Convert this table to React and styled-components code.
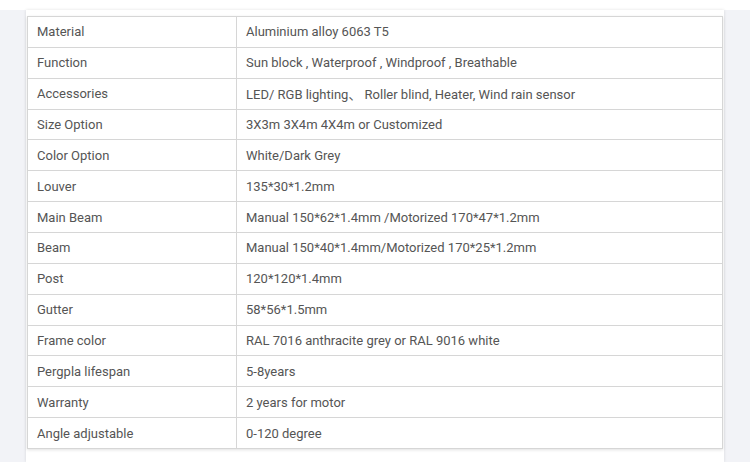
import React from "react";
import styled, { createGlobalStyle } from "styled-components";

const GlobalStyle = createGlobalStyle`
  html, body {
    margin: 0;
    padding: 0;
    background: #ffffff;
  }
  body {
    font-family: Roboto, "Noto Sans CJK SC", "Liberation Sans", Arial, sans-serif;
  }
`;

const Page = styled.div`
  width: 750px;
  height: 462px;
  overflow: hidden;
  padding-top: 10px;
  box-sizing: border-box;
`;

const Backdrop = styled.div`
  background: #f2f3f7;
  height: 452px;
  padding: 0 26px;
  box-sizing: border-box;
`;

const Panel = styled.div`
  background: #ffffff;
  height: 100%;
  padding: 6px 1px 0 1px;
  box-sizing: border-box;
  box-shadow: 0 0 3px rgba(0, 0, 0, 0.12);
`;

const Table = styled.table`
  width: 100%;
  border-collapse: collapse;
  box-shadow: 0 1px 3px rgba(0, 0, 0, 0.12);
`;

const Row = styled.tr`
  height: 30.86px;
`;

const Cell = styled.td`
  border: 1px solid #d6d6d6;
  padding: 0 0 0 9px;
  font-size: 13px;
  color: #555555;
  width: ${(p) => p.width || "auto"};
  box-sizing: border-box;
  vertical-align: middle;
`;

const rows = [
  ["Material", "Aluminium alloy 6063 T5"],
  ["Function", "Sun block , Waterproof , Windproof , Breathable"],
  ["Accessories", "LED/ RGB lighting、 Roller blind, Heater, Wind rain sensor"],
  ["Size Option", "3X3m 3X4m 4X4m or Customized"],
  ["Color Option", "White/Dark Grey"],
  ["Louver", "135*30*1.2mm"],
  ["Main Beam", "Manual 150*62*1.4mm /Motorized 170*47*1.2mm"],
  ["Beam", "Manual 150*40*1.4mm/Motorized 170*25*1.2mm"],
  ["Post", "120*120*1.4mm"],
  ["Gutter", "58*56*1.5mm"],
  ["Frame color", "RAL 7016 anthracite grey or RAL 9016 white"],
  ["Pergpla lifespan", "5-8years"],
  ["Warranty", "2 years for motor"],
  ["Angle adjustable", "0-120 degree"],
];

export default function App() {
  return (
    <>
      <GlobalStyle />
      <Page>
        <Backdrop>
          <Panel>
            <Table>
              <tbody>
                {rows.map(([k, v]) => (
                  <Row key={k}>
                    <Cell width="209px">{k}</Cell>
                    <Cell>{v}</Cell>
                  </Row>
                ))}
              </tbody>
            </Table>
          </Panel>
        </Backdrop>
      </Page>
    </>
  );
}
